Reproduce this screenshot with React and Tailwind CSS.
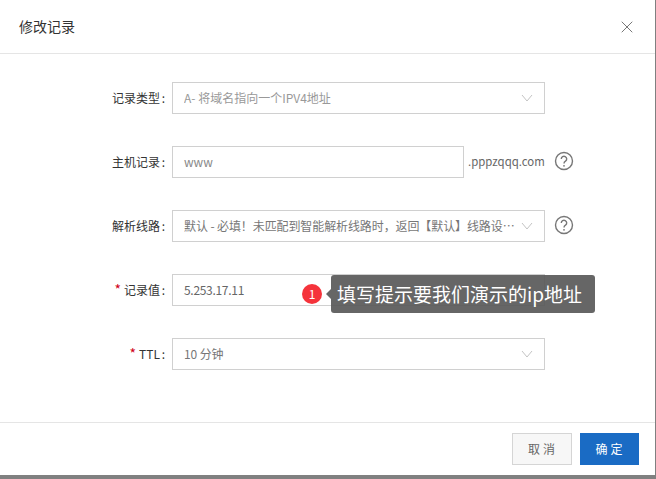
import { X } from 'lucide-react';

const font = "font-['Noto_Sans_CJK_SC','Open_Sans',sans-serif]";

function Chevron() {
  return (
    <svg className="w-[12px] h-[8px] shrink-0 text-[#c4c4c4]" viewBox="0 0 12 8" fill="none" stroke="currentColor" strokeWidth="1">
      <path d="M1 1l5 6 5-6" />
    </svg>
  );
}

function Help() {
  return (
    <svg className="w-[20px] h-[20px] shrink-0 text-[#777]" viewBox="0 0 20 20" fill="none" stroke="currentColor">
      <circle cx="10" cy="10" r="8.5" strokeWidth="1.4" />
      <path d="M7.3 8a2.7 2.7 0 1 1 4.2 2.2c-1 .7-1.5 1.1-1.5 2.3" strokeWidth="1.4" />
      <circle cx="10" cy="14.8" r="0.9" fill="currentColor" stroke="none" />
    </svg>
  );
}

function Row({ label, required, children }) {
  return (
    <div className="flex items-center h-[32px]">
      <label className="w-[172px] pr-[7px] text-right text-[12px] text-[#333] shrink-0">
        {required && <span className="text-[#d0021b] text-[14px] leading-none mr-[3px]">*</span>}
        {label}
        <span className="inline-block w-[5px] text-right">:</span>
      </label>
      {children}
    </div>
  );
}

function Select({ value, muted }) {
  return (
    <div className="w-[373px] h-[32px] border border-[#d0d0d0] bg-white flex items-center justify-between pl-[11px] pr-[11px] shrink-0">
      <span className={`text-[12px] truncate ${muted ? 'text-[#999]' : 'text-[#777] tracking-[-0.1px]'}`}>{value}</span>
      <Chevron />
    </div>
  );
}

export default function App() {
  return (
    <div className={`w-[656px] h-[479px] bg-[#808080] ${font} overflow-hidden`}>
      <div className="w-[655px] h-[475px] bg-white flex flex-col">
        <div className="h-[54px] border-b border-[#e5e5e5] flex items-center justify-between pl-[19px] pr-[18px] shrink-0">
          <span className="text-[14px] text-[#333]">修改记录</span>
          <X className="w-[20px] h-[20px] text-[#777]" strokeWidth={1.2} />
        </div>

        <div className="flex-1 pt-[28px] flex flex-col gap-[32px]">
          <Row label="记录类型">
            <Select value="A- 将域名指向一个IPV4地址" muted />
          </Row>

          <Row label="主机记录">
            <div className="w-[292px] h-[32px] border border-[#d0d0d0] flex items-center pl-[11px] text-[12px] text-[#888] shrink-0">www</div>
            <span className="ml-[4px] text-[11.4px] text-[#666]">.pppzqqq.com</span>
            <span className="ml-[9px] -mt-[3px]"><Help /></span>
          </Row>

          <Row label="解析线路">
            <Select value="默认 - 必填！未匹配到智能解析线路时，返回【默认】线路设置结果" />
            <span className="ml-[9px] -mt-[3px]"><Help /></span>
          </Row>

          <Row label="记录值" required>
            <div className="relative w-[373px] h-[32px] border border-[#d0d0d0] flex items-center pl-[11px] text-[12px] text-[#666] tracking-[-0.3px] shrink-0">
              5.253.17.11
              <span className="absolute left-[129px] top-[9px] w-[20px] h-[20px] rounded-full bg-[#f5333b] text-white text-[12px] tracking-normal flex items-center justify-center">1</span>
              <div className="absolute left-[158px] top-0 w-[264px] h-[38px] rounded-[3px] bg-[#555]/90 text-white text-[19px] tracking-normal flex items-center pl-[6px] whitespace-nowrap">
                <span className="absolute -left-[5px] top-[14px] w-0 h-0 border-y-[5px] border-y-transparent border-r-[5px] border-r-[#666]" />
                填写提示要我们演示的ip地址
              </div>
            </div>
          </Row>

          <Row label="TTL" required>
            <Select value="10 分钟" />
          </Row>
        </div>

        <div className="h-[53px] border-t border-[#e5e5e5] flex items-center justify-end gap-[8px] pr-[16px] shrink-0">
          <button className="w-[60px] h-[32px] border border-[#d5d5d5] bg-[#f7f7f7] pl-[2px] text-[12px] text-[#666] tracking-[3px]">取消</button>
          <button className="w-[59px] h-[32px] bg-[#1a6bc4] pl-[2px] text-[12px] text-white tracking-[3px]">确定</button>
        </div>
      </div>
    </div>
  );
}
